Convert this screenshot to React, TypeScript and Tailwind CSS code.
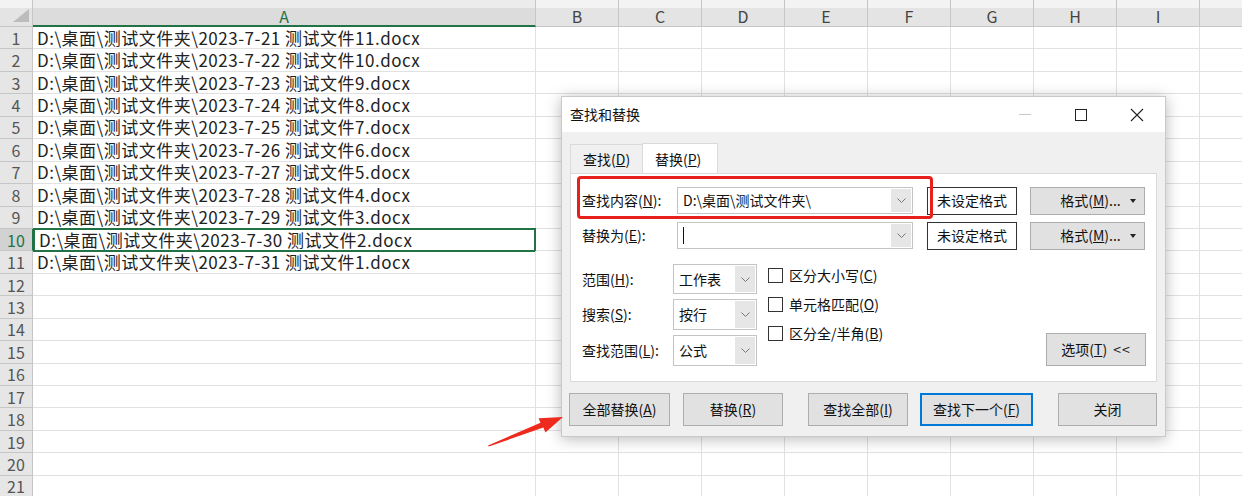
import type { ReactNode } from "react";

const files = [
  "D:\\桌面\\测试文件夹\\2023-7-21 测试文件11.docx",
  "D:\\桌面\\测试文件夹\\2023-7-22 测试文件10.docx",
  "D:\\桌面\\测试文件夹\\2023-7-23 测试文件9.docx",
  "D:\\桌面\\测试文件夹\\2023-7-24 测试文件8.docx",
  "D:\\桌面\\测试文件夹\\2023-7-25 测试文件7.docx",
  "D:\\桌面\\测试文件夹\\2023-7-26 测试文件6.docx",
  "D:\\桌面\\测试文件夹\\2023-7-27 测试文件5.docx",
  "D:\\桌面\\测试文件夹\\2023-7-28 测试文件4.docx",
  "D:\\桌面\\测试文件夹\\2023-7-29 测试文件3.docx",
  "D:\\桌面\\测试文件夹\\2023-7-30 测试文件2.docx",
  "D:\\桌面\\测试文件夹\\2023-7-31 测试文件1.docx",
];

const otherCols = ["B", "C", "D", "E", "F", "G", "H", "I"];
const rowNums = Array.from({ length: 21 }, (_, i) => i + 1);

function Chevron() {
  return (
    <svg width="9" height="5" viewBox="0 0 9 5" className="text-[#777]">
      <path d="M0.5 0.5 L4.5 4.5 L8.5 0.5" fill="none" stroke="currentColor" strokeWidth="1" />
    </svg>
  );
}

function Combo({ value, width, height }: { value: ReactNode; width: string; height: string }) {
  return (
    <div className={`flex ${width} ${height} border border-[#c4c4c4] bg-white`}>
      <div className="flex flex-1 items-center pl-[5px] text-[14px]">{value}</div>
      <div className="m-[1px] flex w-[20px] items-center justify-center bg-[#e6e6e6]">
        <Chevron />
      </div>
    </div>
  );
}

function Btn({ children, className = "" }: { children: ReactNode; className?: string }) {
  return (
    <div
      className={`flex h-[33px] items-center justify-center border border-[#adadad] bg-[#e1e1e1] text-[14px] text-[#111] ${className}`}
    >
      {children}
    </div>
  );
}

function FormatBtn() {
  return (
    <div className="relative ml-[13px] flex h-[28px] w-[115px] items-center justify-center border border-[#adadad] bg-[#e1e1e1] pl-[6px] text-[14px] text-[#111]">
      格式(<u>M</u>)...
      <svg className="absolute right-[8px] top-[11px]" width="6" height="4" viewBox="0 0 6 4">
        <polygon points="0,0 6,0 3,4" fill="#222" />
      </svg>
    </div>
  );
}

function Check({ label }: { label: ReactNode }) {
  return (
    <div className="flex h-[15px] items-center gap-[6px]">
      <div className="h-[15px] w-[15px] border border-[#333] bg-white" />
      <span className="text-[14px]">{label}</span>
    </div>
  );
}

function Dialog() {
  return (
    <div className="absolute left-[561px] top-[96px] h-[341px] w-[605px] border border-[#c9c9c9] bg-[#f0f0f0] text-[#111] shadow-[0_2px_14px_rgba(0,0,0,0.28)]">
      {/* title bar */}
      <div className="flex h-[35px] items-center bg-white">
        <span className="pl-[8px] text-[14px]">查找和替换</span>
        <div className="ml-auto flex h-full">
          <div className="flex w-[56px] items-center justify-center">
            <div className="h-[1px] w-[12px] bg-[#c8c8c8]" />
          </div>
          <div className="flex w-[56px] items-center justify-center">
            <div className="h-[12px] w-[12px] border border-[#222]" />
          </div>
          <div className="flex w-[56px] items-center justify-center">
            <svg width="14" height="14" viewBox="0 0 14 14">
              <path d="M1 1 L13 13 M13 1 L1 13" stroke="#222" strokeWidth="1.1" />
            </svg>
          </div>
        </div>
      </div>

      <div className="px-[8px] pt-[11px]">
        {/* tabs */}
        <div className="flex h-[31px] items-end">
          <div className="flex h-[30px] w-[73px] items-center border border-b-0 border-[#dadada] pl-[12px] text-[14px]">
            查找(<u>D</u>)
          </div>
          <div className="-ml-[1px] flex h-[31px] w-[76px] items-center border border-b-0 border-[#dadada] bg-white pl-[12px] text-[14px]">
            替换(<u>P</u>)
          </div>
        </div>

        {/* panel */}
        <div className="relative -mt-[1px] h-[209px] w-[587px] border border-[#dadada] bg-white">
          <div className="flex flex-col gap-[8px] pl-[11px] pt-[13px]">
            <div className="flex h-[27px] items-center">
              <span className="w-[95px] text-[14px]">查找内容(<u>N</u>):</span>
              <Combo value="D:\桌面\测试文件夹\" width="w-[236px]" height="h-[27px]" />
              <div className="ml-[14px] flex h-[28px] w-[90px] items-center justify-center border border-[#333] bg-white text-[14px]">
                未设定格式
              </div>
              <FormatBtn />
            </div>
            <div className="flex h-[27px] items-center">
              <span className="w-[95px] text-[14px]">替换为(<u>E</u>):</span>
              <Combo
                value={<span className="h-[17px] w-[1px] bg-[#111]" />}
                width="w-[236px]"
                height="h-[27px]"
              />
              <div className="ml-[14px] flex h-[28px] w-[90px] items-center justify-center border border-[#333] bg-white text-[14px]">
                未设定格式
              </div>
              <FormatBtn />
            </div>
          </div>

          <div className="mt-[15px] flex pl-[11px]">
            <div className="flex flex-col gap-[5px]">
              <div className="flex h-[30px] items-center">
                <span className="w-[91px] text-[14px]">范围(<u>H</u>):</span>
                <Combo value="工作表" width="w-[84px]" height="h-[30px]" />
              </div>
              <div className="flex h-[31px] items-center">
                <span className="w-[91px] text-[14px]">搜索(<u>S</u>):</span>
                <Combo value="按行" width="w-[84px]" height="h-[31px]" />
              </div>
              <div className="flex h-[31px] items-center">
                <span className="w-[91px] text-[14px]">查找范围(<u>L</u>):</span>
                <Combo value="公式" width="w-[84px]" height="h-[31px]" />
              </div>
            </div>
            <div className="ml-[11px] mt-[4px] flex flex-col gap-[14px]">
              <Check label={<>区分大小写(<u>C</u>)</>} />
              <Check label={<>单元格匹配(<u>O</u>)</>} />
              <Check label={<>区分全/半角(<u>B</u>)</>} />
            </div>
            <Btn className="ml-auto mr-[10px] mt-[69px] w-[100px] gap-[6px]">
              <span>
                选项(<u>T</u>)
              </span>
              <span className="tracking-[1px]">&lt;&lt;</span>
            </Btn>
          </div>

          {/* annotation box */}
          <div className="absolute left-[6px] top-[2px] h-[43px] w-[356px] rounded-[4px] border-[3px] border-[#e8201c]" />
        </div>

        {/* bottom buttons */}
        <div className="-ml-[1px] mt-[11px] flex">
          <Btn className="w-[101px]">全部替换(<u>A</u>)</Btn>
          <Btn className="ml-[13px] w-[100px]">替换(<u>R</u>)</Btn>
          <Btn className="ml-[25px] w-[100px]">查找全部(<u>I</u>)</Btn>
          <Btn className="ml-[12px] w-[113px] border-2! border-[#0078d7]!">查找下一个(<u>F</u>)</Btn>
          <Btn className="ml-[25px] w-[99px]">关闭</Btn>
        </div>
      </div>
    </div>
  );
}

export default function App() {
  return (
    <div
      className="relative h-[496px] w-[1242px] overflow-hidden bg-white text-[#222]"
      style={{ fontFamily: '"Noto Sans CJK SC", "Noto Sans", sans-serif' }}
    >
      {/* column headers */}
      <div className="flex h-[27px] bg-[linear-gradient(to_bottom,#f3f3f3_8px,#e4e4e4_8px)] leading-[18px]">
        <div className="relative w-[33px] shrink-0 border-b border-r border-[#c6c6c6]">
          <svg className="absolute bottom-[4px] right-[3px]" width="16" height="13" viewBox="0 0 16 13">
            <polygon points="16,0 16,13 0,13" fill="#bcbcbc" />
          </svg>
        </div>
        <div className="flex w-[503px] shrink-0 items-center justify-center border-b-2 border-r border-b-[#217346] border-r-[#c6c6c6] bg-[linear-gradient(to_bottom,#ececec_8px,#dcdcdc_8px)] pt-[6px] text-[16px] text-[#217346]">
          A
        </div>
        {otherCols.map((c) => (
          <div
            key={c}
            className="flex w-[83px] shrink-0 items-center justify-center border-b border-r border-[#c6c6c6] pt-[6px] text-[16px] text-[#444]"
          >
            {c}
          </div>
        ))}
        <div className="flex-1 border-b border-[#c6c6c6]" />
      </div>

      {/* rows */}
      {rowNums.map((n) => {
        const sel = n === 10;
        return (
          <div key={n} className="flex h-[22.45px] leading-[20px]">
            <div
              className={`flex w-[33px] shrink-0 items-center justify-center border-b border-r text-[16px] ${
                sel
                  ? "border-b-[#c6c6c6] border-r-[#217346] bg-[#d2d2d2] text-[#217346]"
                  : "border-[#c6c6c6] bg-[#e6e6e6] text-[#555]"
              }`}
            >
              {n}
            </div>
            <div
              className={`flex w-[503px] shrink-0 items-center overflow-visible whitespace-nowrap pl-[4px] text-[17px] tracking-[0.5px] text-[#222] ${
                sel ? "-my-[1px] border-2 border-[#217346] pl-[3px]" : "border-b border-r border-[#e1e1e1]"
              }`}
            >
              {files[n - 1] ?? ""}
            </div>
            {otherCols.map((c) => (
              <div key={c} className="w-[83px] shrink-0 border-b border-r border-[#e1e1e1]" />
            ))}
            <div className="flex-1 border-b border-[#e1e1e1]" />
          </div>
        );
      })}

      <Dialog />

      {/* red arrow */}
      <svg className="absolute left-[480px] top-[405px]" width="90" height="50" viewBox="0 0 90 50">
        <polygon
          points="8,40.5 60.5,17.8 58.6,13.2 83,12 65.4,27.6 63.4,22.6 8.8,41.5"
          fill="#ee2a1f"
        />
      </svg>
    </div>
  );
}
